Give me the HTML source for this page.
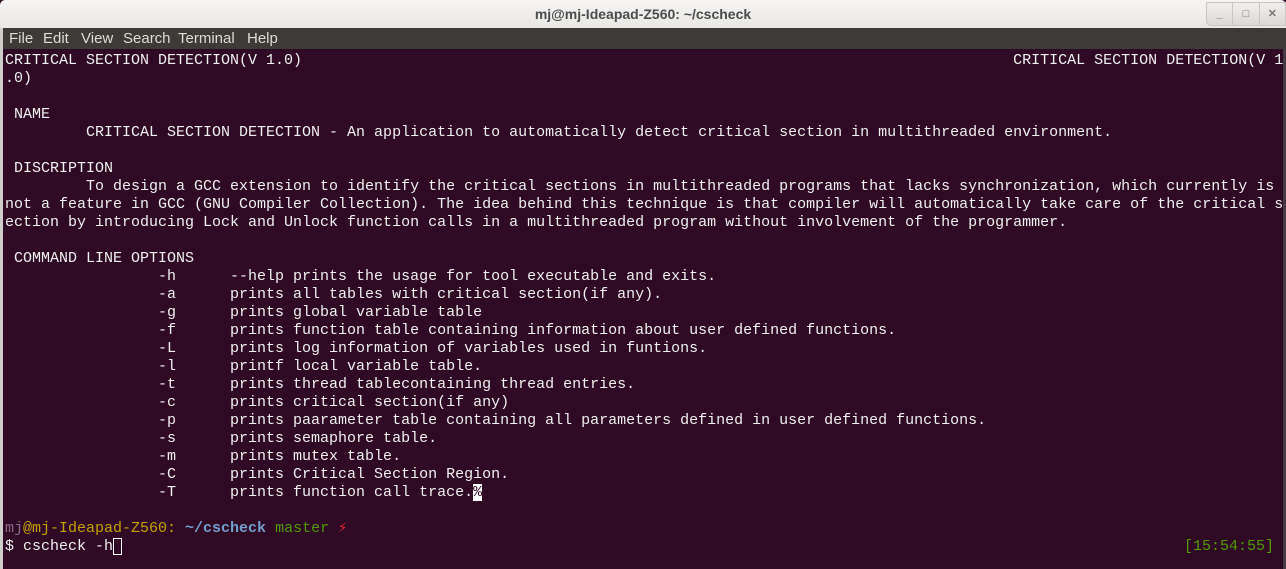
<!DOCTYPE html>
<html><head><meta charset="utf-8"><style>
html,body{margin:0;padding:0;width:1286px;height:569px;overflow:hidden;background:#300a24;}
#title{position:absolute;left:0;top:0;width:1286px;height:28px;background:linear-gradient(#f6f5f4,#e8e7e5);border-radius:5px 5px 0 0;font:bold 14px "Liberation Sans",sans-serif;color:#4c4c4c;text-align:center;line-height:29px;}
#btns{position:absolute;right:0;top:2px;width:78px;height:22px;border:1px solid #c8c6c2;border-radius:0 0 0 5px;background:linear-gradient(#f0efee,#dcdad6);display:flex}
#btns div{flex:1;border-left:1px solid #c8c6c2;color:#777;font:bold 11px "Liberation Sans",sans-serif;text-align:center;line-height:22px}
#btns div:first-child{border-left:none}
#menu{position:absolute;left:0;top:28px;width:1286px;height:21px;background:#3c3b37;font:15px "Liberation Sans",sans-serif;color:#dfdbd2;line-height:22px;}
#menu span{position:absolute;top:0}
#l{position:absolute;left:0;top:28px;width:3px;height:541px;background:#cfcdca}
#r{position:absolute;right:0;top:49px;width:3px;height:520px;background:#4a3a44}
pre{position:absolute;left:5px;top:52px;margin:0;font:15px/18px "Liberation Mono",monospace;color:#f0f0ee;}
.inv{background:#fff;color:#300a24}
.u{color:#8a6a8a}.y{color:#c4a000}.b{color:#729fcf;font-weight:bold}.g{color:#4e9a06}.rd{color:#ef2929}
.cur{outline:1px solid #fff;outline-offset:-1px}
#ts{position:absolute;left:1184px;top:538px;font:15px/18px "Liberation Mono",monospace;color:#4e9a06}
</style></head><body>
<div id="title">mj@mj-Ideapad-Z560: ~/cscheck<div id="btns"><div>_</div><div>□</div><div>✕</div></div></div>
<div id="menu"><span style="left:9px">File</span><span style="left:43px">Edit</span><span style="left:81px">View</span><span style="left:123px">Search</span><span style="left:178px">Terminal</span><span style="left:247px">Help</span></div>
<div id="l"></div><div id="r"></div>
<pre>CRITICAL SECTION DETECTION(V 1.0)                                                                               CRITICAL SECTION DETECTION(V 1
.0)

 NAME
         CRITICAL SECTION DETECTION - An application to automatically detect critical section in multithreaded environment.

 DISCRIPTION
         To design a GCC extension to identify the critical sections in multithreaded programs that lacks synchronization, which currently is
not a feature in GCC (GNU Compiler Collection). The idea behind this technique is that compiler will automatically take care of the critical s
ection by introducing Lock and Unlock function calls in a multithreaded program without involvement of the programmer.

 COMMAND LINE OPTIONS
                 -h      --help prints the usage for tool executable and exits.
                 -a      prints all tables with critical section(if any).
                 -g      prints global variable table
                 -f      prints function table containing information about user defined functions.
                 -L      prints log information of variables used in funtions.
                 -l      printf local variable table.
                 -t      prints thread tablecontaining thread entries.
                 -c      prints critical section(if any)
                 -p      prints paarameter table containing all parameters defined in user defined functions.
                 -s      prints semaphore table.
                 -m      prints mutex table.
                 -C      prints Critical Section Region.
                 -T      prints function call trace.<span class="inv">%</span>

<span class="u">mj</span><span class="y">@mj-Ideapad-Z560: </span><span class="b">~/cscheck</span> <span class="g">master</span> <span class="rd">⚡</span>
$ cscheck -h<span class="cur"> </span></pre>
<div id="ts">[15:54:55]</div>
</body></html>
